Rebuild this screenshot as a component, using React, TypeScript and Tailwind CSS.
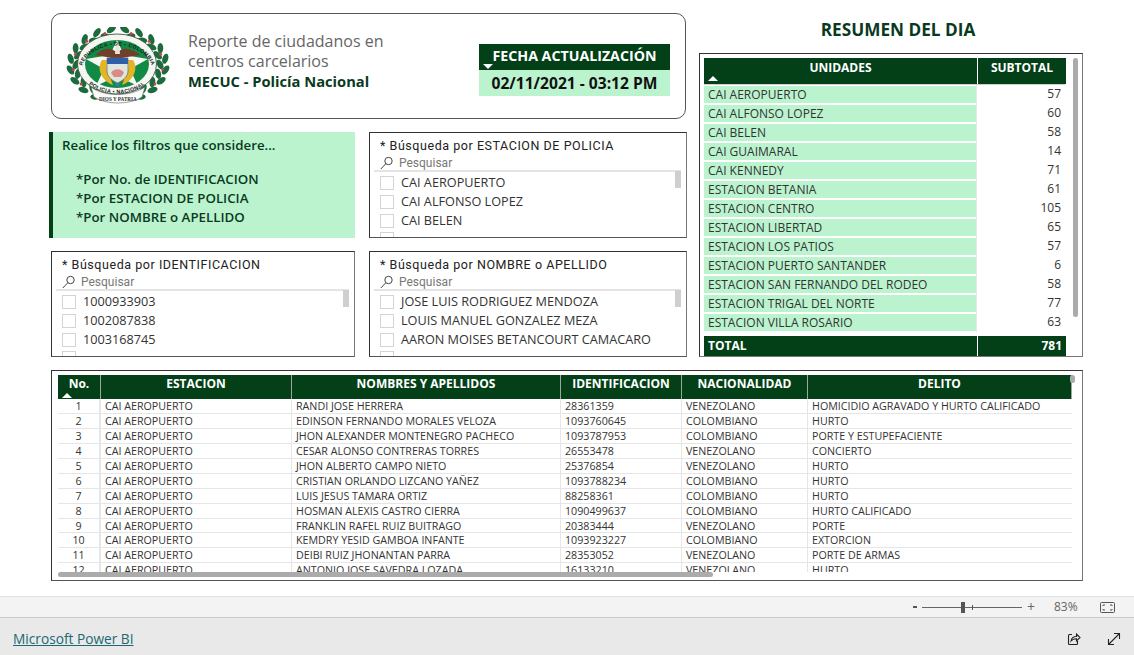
const DARK = "bg-[#034018]"

const summary: [string, number][] = [
  ["CAI AEROPUERTO", 57],
  ["CAI ALFONSO LOPEZ", 60],
  ["CAI BELEN", 58],
  ["CAI GUAIMARAL", 14],
  ["CAI KENNEDY", 71],
  ["ESTACION BETANIA", 61],
  ["ESTACION CENTRO", 105],
  ["ESTACION LIBERTAD", 65],
  ["ESTACION LOS PATIOS", 57],
  ["ESTACION PUERTO SANTANDER", 6],
  ["ESTACION SAN FERNANDO DEL RODEO", 58],
  ["ESTACION TRIGAL DEL NORTE", 77],
  ["ESTACION VILLA ROSARIO", 63],
]

const people = [
  ["RANDI JOSE HERRERA", "28361359", "VENEZOLANO", "HOMICIDIO AGRAVADO Y HURTO CALIFICADO"],
  ["EDINSON FERNANDO MORALES VELOZA", "1093760645", "COLOMBIANO", "HURTO"],
  ["JHON ALEXANDER MONTENEGRO PACHECO", "1093787953", "COLOMBIANO", "PORTE Y ESTUPEFACIENTE"],
  ["CESAR ALONSO CONTRERAS TORRES", "26553478", "VENEZOLANO", "CONCIERTO"],
  ["JHON ALBERTO CAMPO NIETO", "25376854", "VENEZOLANO", "HURTO"],
  ["CRISTIAN ORLANDO LIZCANO YAÑEZ", "1093788234", "COLOMBIANO", "HURTO"],
  ["LUIS JESUS TAMARA ORTIZ", "88258361", "COLOMBIANO", "HURTO"],
  ["HOSMAN ALEXIS CASTRO CIERRA", "1090499637", "COLOMBIANO", "HURTO CALIFICADO"],
  ["FRANKLIN RAFEL RUIZ BUITRAGO", "20383444", "VENEZOLANO", "PORTE"],
  ["KEMDRY YESID GAMBOA INFANTE", "1093923227", "COLOMBIANO", "EXTORCION"],
  ["DEIBI RUIZ JHONANTAN PARRA", "28353052", "VENEZOLANO", "PORTE DE ARMAS"],
  ["ANTONIO JOSE SAVEDRA LOZADA", "16133210", "VENEZOLANO", "HURTO"],
]

const COLS = "grid grid-cols-[43px_191px_269px_121px_126px_264px]"

// Escudo de la Policia, dibujado a mano
function Logo() {
  const steps = Array.from({ length: 17 }, (_, i) => i)
  return (
    <svg width="104" height="78" viewBox="0 0 104 78" className="shrink-0">
      <defs>
        <path id="arcTop" d="M15.5 44 A35.5 25.5 0 1 1 86.5 44" />
        <path id="arcBottom" d="M13 38 A38 28.5 0 0 0 89 38" />
      </defs>
      {steps.map((i) => {
        const deg = -82 + i * 9
        const t = (deg * Math.PI) / 180
        const rx = 45
        const ry = 33
        const x = 52 + rx * Math.cos(t)
        const y = 38 + ry * Math.sin(t)
        const rot = deg + 90 + (i % 2 === 0 ? 28 : -28)
        const off = i % 2 === 0 ? 3 : -3
        const lx = x + off * Math.cos(t)
        const ly = y + off * Math.sin(t)
        return (
          <g key={i}>
            <ellipse cx={lx} cy={ly} rx="5.2" ry="2.9" fill="#1d6a3c" transform={`rotate(${rot} ${lx} ${ly})`} />
            <ellipse cx={104 - lx} cy={ly} rx="5.2" ry="2.9" fill="#1d6a3c" transform={`rotate(${-rot} ${104 - lx} ${ly})`} />
            {i % 3 === 1 && <circle cx={x} cy={y} r="1.5" fill="#c9434f" />}
            {i % 3 === 1 && <circle cx={104 - x} cy={y} r="1.5" fill="#c9434f" />}
          </g>
        )
      })}
      <path d="M25 60 C38 70 64 70 79 60 L76 70 C64 78 40 78 28 70Z" fill="#fbfbfb" stroke="#59685c" strokeWidth="0.6" />
      <ellipse cx="51" cy="37" rx="39.5" ry="30" fill="#f5f5f2" stroke="#37563f" strokeWidth="0.9" />
      <ellipse cx="51" cy="37" rx="32" ry="24" fill="#108a45" />
      <polygon points="51,13 58,28 82,32 64,42 72,59 51,49 30,59 38,42 20,32 44,28" fill="#f7f7f3" />
      <path d="M29 28 C37 20 46 20 51 26 C56 20 65 20 74 28 C65 29 58 31 51 32 C44 31 37 29 29 28Z" fill="#70402a" />
      <path d="M50 17 L53 17 L54 27 L49 27Z" fill="#e9e5da" />
      <path d="M36 33 C30 42 36 54 47 58 L44 50 C41 46 40 40 41 33Z" fill="#e3b426" />
      <path d="M67 33 C73 42 67 54 56 58 L59 50 C62 46 63 40 62 33Z" fill="#e3b426" />
      <path d="M41 31 H62 V44 C62 50 56 54 51.5 56 C47 54 41 50 41 44Z" fill="#dfe6df" stroke="#5f6a58" strokeWidth="0.7" />
      <rect x="41" y="31" width="21" height="6" fill="#2f5fa8" />
      <path d="M45 46 C47 41 56 41 58 46 L55 50 H48Z" fill="#d98c84" />
      <path d="M48 56 L51.5 61 L55 56Z" fill="#2f7f9a" />
      <text fontSize="5.3" fontWeight="700" fill="#1c1c1c" fontFamily="'Liberation Sans', sans-serif" letterSpacing="0.35">
        <textPath href="#arcTop" startOffset="50%" textAnchor="middle">REPUBLICA • DE • COLOMBIA</textPath>
      </text>
      <text fontSize="5.3" fontWeight="700" fill="#1c1c1c" fontFamily="'Liberation Sans', sans-serif" letterSpacing="0.35">
        <textPath href="#arcBottom" startOffset="50%" textAnchor="middle">POLICIA • NACIONAL</textPath>
      </text>
      <text x="52" y="73.5" fontSize="5.2" fontWeight="700" textAnchor="middle" fill="#333" fontFamily="'Liberation Serif', serif">DIOS Y PATRIA</text>
    </svg>
  )
}

function Slicer({ title, items }: { title: string; items: string[] }) {
  return (
    <div className="relative h-[106px] overflow-hidden border border-[#333] border-r-[#777] border-b-[#555] bg-white pl-[4px] pr-[5px]">
      <div className="pl-[6px] pt-[4px] font-['Roboto',sans-serif] text-[12.5px] leading-[17px] tracking-[0.55px] text-[#222]">
        {title}
      </div>
      <div className="flex h-[18px] items-center border-b-2 border-[#e4e4e4] pl-[6px] pt-[1px] font-['Roboto',sans-serif] text-[12px] text-[#777]">
        <svg width="13" height="14" viewBox="0 0 13 14" fill="none" stroke="#444" strokeWidth="1" className="mr-[6px]">
          <circle cx="8.5" cy="5" r="3.7" />
          <path d="M5.8 7.8L0.8 13" />
        </svg>
        Pesquisar
      </div>
      <div className="flex flex-col pt-[1px]">
        {items.map((item) => (
          <div key={item} className="flex h-[19px] shrink-0 items-center pl-[6px] font-['Open_Sans',sans-serif] text-[12.7px] text-[#333]">
            <span className="mr-[7px] h-[14px] w-[14px] shrink-0 border border-[#d4d4d4] bg-white" />
            <span className="whitespace-nowrap">{item}</span>
          </div>
        ))}
        <div className="ml-[6px] mt-[2px] h-[14px] w-[14px] border border-[#d4d4d4]" />
      </div>
      <div className="absolute right-[5px] top-[38px] h-[17px] w-[6px] bg-[#cfcfcf]" />
    </div>
  )
}

function SortCaret({ className }: { className: string }) {
  return <span className={`absolute h-0 w-0 border-x-[5px] border-x-transparent ${className}`} />
}

function SummaryTable() {
  return (
    <div className="relative h-[304px] border border-[#333] border-r-[#777] border-b-[#777] bg-white pl-[4px] pt-[4px] font-['Open_Sans',sans-serif]">
      <div className="w-[361px]">
        <div className="grid h-[27px] grid-cols-[273px_88px] gap-x-px border-b border-[#cfcfcf]">
          <div className={`relative ${DARK} pt-[1px] text-center text-[12px] font-bold text-white`}>
            UNIDADES
            <SortCaret className="bottom-[3px] left-[4px] border-b-[5px] border-b-white" />
          </div>
          <div className={`${DARK} pt-[1px] text-center text-[12px] font-bold text-white`}>SUBTOTAL</div>
        </div>
        <div className="h-[251px]">
          {summary.map(([name, total]) => (
            <div key={name} className="grid h-[19px] grid-cols-[272px_89px] text-[12px] leading-[18px] text-[#333]">
              <div className="border-y border-y-white bg-[#bbf3cf] pl-[4px] leading-[17px]">{name}</div>
              <div className="border-l border-[#e8e8e8] pr-[4px] text-right">{total}</div>
            </div>
          ))}
        </div>
        <div className="grid h-[18px] grid-cols-[273px_88px] gap-x-px text-[12px] font-bold leading-[20px] text-white">
          <div className={`${DARK} pl-[4px]`}>TOTAL</div>
          <div className={`${DARK} pr-[4px] text-right`}>781</div>
        </div>
      </div>
      <div className="absolute right-[4px] top-[4px] h-[259px] w-[5px] rounded-full bg-[#ababab]" />
    </div>
  )
}

function DetailTable() {
  return (
    <div className="relative h-[211px] overflow-hidden border border-[#333] border-r-[#777] border-b-[#555] bg-white pl-[6px] pt-[4px] font-['Open_Sans',sans-serif]">
      <div className={`${COLS} h-[24px] w-[1014px] text-center text-[12px] font-bold text-white`}>
        {["No.", "ESTACION", "NOMBRES Y APELLIDOS", "IDENTIFICACION", "NACIONALIDAD", "DELITO"].map((h, i) => (
          <div key={h} className={`relative ${DARK} border-r border-[#9aa89f] leading-[17px]`}>
            {h}
            {i === 0 && <SortCaret className="bottom-[1px] left-[4px] border-b-[5px] border-b-white" />}
          </div>
        ))}
      </div>
      <div className="h-[173px] w-[1014px] overflow-hidden">
        {people.map((p, i) => (
          <div key={p[0]} className={`${COLS} h-[14.95px] border-b border-[#e6e6e6] text-[10.7px] leading-[14px] text-[#333]`}>
            <div className="border-r-2 border-[#e6e6e6] text-center">{i + 1}</div>
            <div className="border-r border-[#e6e6e6] pl-[4px]">CAI AEROPUERTO</div>
            <div className="border-r border-[#e6e6e6] pl-[4px]">{p[0]}</div>
            <div className="border-r border-[#e6e6e6] pl-[4px]">{p[1]}</div>
            <div className="border-r border-[#e6e6e6] pl-[4px]">{p[2]}</div>
            <div className="pl-[4px]">{p[3]}</div>
          </div>
        ))}
      </div>
      <div className="absolute bottom-[3px] left-[6px] h-[5px] w-[655px] rounded-full bg-[#ababab]" />
      <div className="absolute right-[7px] top-[4px] h-[8px] w-[5px] rounded-full bg-[#ababab]" />
    </div>
  )
}

export default function App() {
  return (
    <div className="flex h-[655px] w-[1134px] flex-col overflow-hidden bg-white font-['Open_Sans',sans-serif]">
      <main className="h-[596px] pl-[51px] pt-[13px]">
        <div className="flex w-[1032px] gap-[12px]">
          {/* Left side: header + filters */}
          <div className="flex w-[636px] flex-col gap-[13px]">
            <div className="flex h-[106px] w-[635px] items-center rounded-[10px] border border-[#555] pl-[14px]">
              <Logo />
              <div className="mb-[10px] ml-[18px] w-[291px]">
                <div className="w-[220px] text-[16px] leading-[20px] text-[#666]">Reporte de ciudadanos en centros carcelarios</div>
                <div className="text-[14.7px] font-bold leading-[21px] text-[#0a3a1e]">MECUC - Policía Nacional</div>
              </div>
              <div className="mt-[8px] w-[191px]">
                <div className={`relative h-[26px] ${DARK} text-center text-[14.2px] font-bold leading-[24px] text-white`}>
                  FECHA ACTUALIZACIÓN
                  <SortCaret className="bottom-[1px] left-[4px] border-t-[5px] border-t-white" />
                </div>
                <div className="h-[26px] bg-[#bbf3cf] text-center text-[15.6px] font-bold leading-[26px] text-[#111]">
                  02/11/2021 - 03:12 PM
                </div>
              </div>
            </div>

            <div className="grid grid-cols-[304px_318px] gap-x-[14px]">
              <div className="-ml-[2px] h-[106px] border-l-[4px] border-[#034018] bg-[#bbf3cf] pl-[9px] pt-[4px] text-[13.3px] font-semibold leading-[19px] text-[#0a3a1e]">
                <div>Realice los filtros que considere...</div>
                <div className="mt-[15px] pl-[14px]">
                  <div>*Por No. de IDENTIFICACION</div>
                  <div>*Por ESTACION DE POLICIA</div>
                  <div>*Por NOMBRE o APELLIDO</div>
                </div>
              </div>
              <Slicer title="* Búsqueda por ESTACION DE POLICIA" items={["CAI AEROPUERTO", "CAI ALFONSO LOPEZ", "CAI BELEN"]} />
            </div>

            <div className="grid grid-cols-[304px_318px] gap-x-[14px]">
              <Slicer title="* Búsqueda por IDENTIFICACION" items={["1000933903", "1002087838", "1003168745"]} />
              <Slicer
                title="* Búsqueda por NOMBRE o APELLIDO"
                items={["JOSE LUIS RODRIGUEZ MENDOZA", "LOUIS MANUEL GONZALEZ MEZA", "AARON MOISES BETANCOURT CAMACARO"]}
              />
            </div>
          </div>

          {/* Right side: resumen */}
          <div className="flex w-[384px] flex-col">
            <div className="h-[40px] pl-[14px] pt-[4px] text-center text-[17.2px] font-bold leading-[25px] text-[#0a3a1e]">RESUMEN DEL DIA</div>
            <SummaryTable />
          </div>
        </div>
        <div className="mt-[13px] w-[1032px]">
          <DetailTable />
        </div>
      </main>

      {/* Zoom bar */}
      <div className="flex h-[22px] items-center justify-end border-y border-[#e2e2e2] border-b-[#c8c8c8] bg-[#f3f3f3] pr-[19px] text-[12px] text-[#666]">
        <span className="mr-[5px] h-[2px] w-[4px] bg-[#555]" />
        <div className="relative h-[1px] w-[100px] bg-[#666]">
          <span className="absolute left-[39px] top-[-5px] h-[11px] w-[4px] bg-[#555]" />
          <span className="absolute left-[50px] top-[-2px] h-[5px] w-[1px] bg-[#555]" />
        </div>
        <span className="ml-[5px] text-[14px] leading-none">+</span>
        <span className="ml-[19px] w-[24px]">83%</span>
        <svg width="15" height="11" viewBox="0 0 15 11" fill="none" stroke="#555" className="ml-[22px]">
          <rect x="0.5" y="0.5" width="14" height="10" rx="1" />
          <path d="M3 4V3H5M10 3H12V4M12 7V8H10M5 8H3V7" />
        </svg>
      </div>

      {/* Footer */}
      <div className="flex flex-1 items-center justify-between bg-[#e9e9e9] pl-[13px] pr-[13px] pt-[5px]">
        <a className="text-[13.7px] text-[#1a6a72] underline">Microsoft Power BI</a>
        <div className="flex items-center gap-[26px]">
          <svg width="14" height="14" viewBox="0 0 14 14" fill="none" stroke="#222" strokeWidth="1.1">
            <path d="M5 2.5H2.5C1.8 2.5 1.5 2.8 1.5 3.5V11.5C1.5 12.2 1.8 12.5 2.5 12.5H9.5C10.2 12.5 10.5 12.2 10.5 11.5V9" />
            <path d="M4 9C4.5 6 7 4.5 9.5 4.5V2L13 5.5L9.5 9V6.7C7.5 6.7 5.5 7.3 4 9Z" />
          </svg>
          <svg width="14" height="14" viewBox="0 0 14 14" fill="none" stroke="#222" strokeWidth="1.1">
            <path d="M1.5 12.5L12.5 1.5M7 1.5H12.5V7M1.5 7V12.5H7" />
          </svg>
        </div>
      </div>
    </div>
  )
}
